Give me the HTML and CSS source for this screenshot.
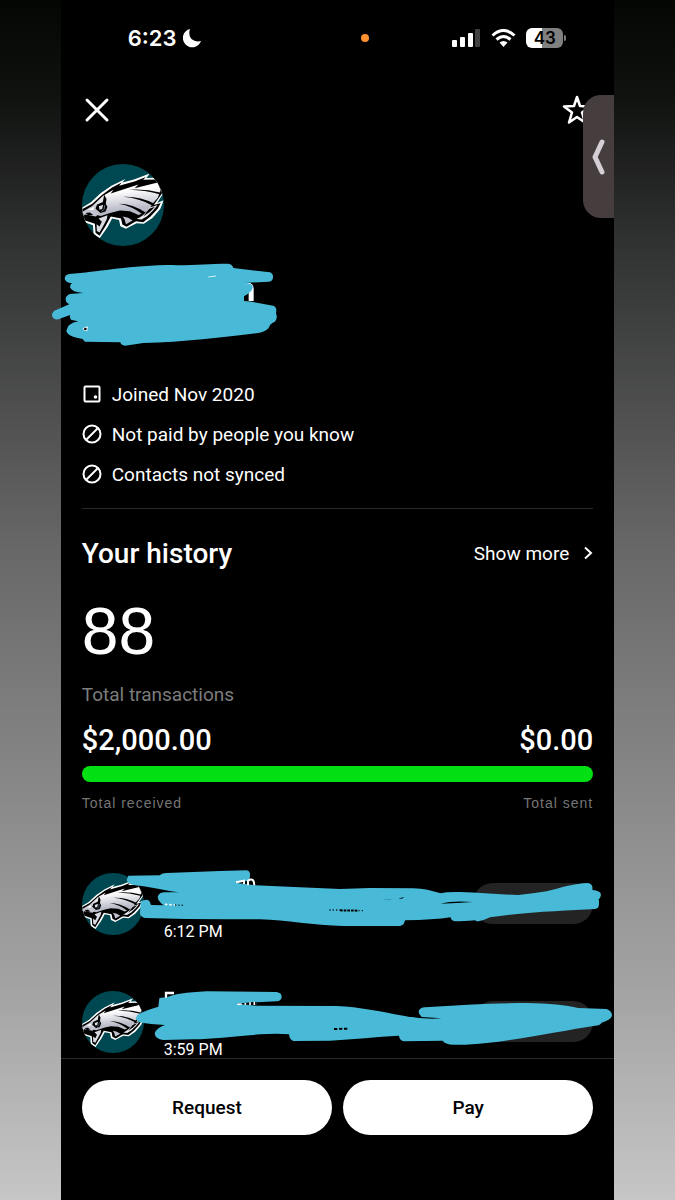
FILE: index.html
```
<!DOCTYPE html>
<html lang="en">
<head>
    <meta charset="UTF-8">
    <meta name="viewport" content="width=device-width, initial-scale=1.0">
    <title>Profile</title>
    <link rel="stylesheet" href="styles.css">
</head>
<body>
    <svg class="defs" aria-hidden="true">
        <defs>
            <linearGradient id="feather" x1="0.4" y1="0" x2="0.6" y2="1">
                <stop offset="0.25" stop-color="#ffffff"/>
                <stop offset="0.8" stop-color="#b9bac8"/>
            </linearGradient>
            <clipPath id="round"><circle cx="159" cy="149" r="124"/></clipPath>
        </defs>
        <symbol id="eagle" viewBox="35 25 248 248">
            <g clip-path="url(#round)">
                <rect x="35" y="25" width="248" height="248" fill="#004851"/>
                <path fill="#fff" d="M30 160L62 141L92 113L124 91L166 70L157 81L192 72L240 54L230 67L268 66L290 100L262 143L282 135L272 160L248 188L222 206L200 204L168 221L151 213L147 194L126 190L112 216L89 249L70 238L68 210L30 196Z"/>
                <path fill="#000" d="M30 165L66 145L96 118L126 96L155 81L147 91L196 77L228 64L220 73L274 72L284 104L252 149L273 143L264 160L243 183L220 201L198 198L170 215L157 208L153 190L122 184L106 213L88 242L76 233L74 206L30 191Z"/>
                <path fill="url(#feather)" d="M66 152L98 122L130 103L122 114L206 87L194 98L264 81L273 104L264 128L248 145L240 160L225 172L206 179L180 168L150 166L120 173L92 182L72 178Z"/>
                <path fill="#000" d="M176 103Q224 99 274 112L272 117Q226 104 176 103ZM160 124Q210 122 254 145L249 151Q208 128 160 124ZM146 145Q188 145 230 173L220 179Q188 152 146 145Z"/>
                <path fill="#000" d="M128 172Q158 164 178 175Q192 188 208 184L196 199L180 192Q158 174 128 180Z"/>
                <path fill="#c2c3ce" d="M158 184Q176 186 188 196L168 207L164 193Z"/>
                <path fill="#e8e8ee" d="M238 157L264 149L250 166L232 183L215 193L200 191Q224 181 238 157Z"/>
                <path fill="#000" d="M238 160L256 154L240 170L220 184Z"/>
                <path fill="#c3c4cf" d="M34 171L67 151L80 150L75 163L89 172L77 184L44 178L34 187Z"/>
                <path fill="#fff" d="M52 163L72 154L69 164Z"/>
                <path fill="#000" d="M46 173L59 172L69 179L54 181Z"/>
                <path fill="#d9dae1" d="M85 190L112 180L110 192L100 211L88 232L80 228L79 207L88 214L95 200Z"/>
                <path fill="#000" d="M102 118L109 131L107 146L112 154L106 169L91 173L76 160L80 148L98 140Z"/>
                <path fill="#d7dde5" d="M86 153L99 148L96 161L88 163Z"/>
                <path fill="none" stroke="#5f737b" stroke-width="3" d="M104 149L102 162L94 168"/>
            </g>
        </symbol>
    </svg>

    <div class="phone">
        <div class="status-bar">
            <div class="clock">
                <span>6:23</span>
                <svg width="20" height="20" viewBox="0 0 20 20"><path fill="#fff" d="M7 1A9.300 9.300 0 1 0 18 13C11 15 4 10 7 1Z"/></svg>
            </div>
            <span class="mic-dot"></span>
            <div class="signals">
                <svg width="29" height="18" viewBox="0 0 29 18">
                    <g fill="#fff"><rect x="0" y="11" width="5" height="7" rx="1"/><rect x="8" y="8" width="5" height="10" rx="1"/><rect x="16" y="4" width="5" height="14" rx="1"/></g>
                    <rect x="23" y="0" width="5" height="18" rx="1" fill="#414141"/>
                </svg>
                <svg width="25" height="18" viewBox="0 0 25 18">
                    <g fill="none" stroke="#fff" stroke-width="3"><path d="M1.500 6.500Q12.500 -3.500 23.500 6.500"/><path d="M5.500 10.500Q12.500 4.500 19.500 10.500"/></g>
                    <path fill="#fff" d="M8.500 13.500Q12.500 10.500 16.500 13.500L12.500 18Z"/>
                </svg>
                <span class="battery">43</span>
            </div>
        </div>

        <header class="top-bar">
            <button class="icon-btn" aria-label="Close">
                <svg width="30" height="30" viewBox="0 0 30 30"><path d="M5 5L25 25M25 5L5 25" stroke="#fff" stroke-width="3" stroke-linecap="round"/></svg>
            </button>
            <button class="icon-btn" aria-label="Favorite">
                <svg width="32" height="32" viewBox="0 0 32 32"><path d="M16 3L19 12L29 12.500L21 18.500L24 28.500L16 23L8 28.500L11 18.500L3 12.500L13 12Z" fill="none" stroke="#fff" stroke-width="2.500" stroke-linejoin="round"/></svg>
            </button>
        </header>
        <button class="side-handle" aria-label="Show side panel">
            <svg width="16" height="40" viewBox="0 0 16 40"><path d="M12 5L5 20L12 35" fill="none" stroke="#d5ced4" stroke-width="5" stroke-linecap="round" stroke-linejoin="round"/></svg>
        </button>

        <main>
            <section class="profile">
                <svg class="avatar"><use href="#eagle"/></svg>
                <div class="name">
                    <svg class="scribble scribble-name" viewBox="30 18 690 261">
                        <path fill="#fff" d="M610 85Q640 78 641 100L641 138L626 138L626 100Z"/>
                        <path fill="#48bad7" d="M88 57C180 50 240 35 380 30C460 32 500 26 565 26Q578 28 580 39L690 52Q700 56 699 68Q697 80 685 80L612 84Q640 84 638 98Q636 110 612 124L612 138C640 140 670 147 700 152Q712 156 708 175Q714 190 705 200Q690 206 688 215Q682 228 655 234C560 245 430 262 310 264L255 272Q244 272 241 262L135 260Q130 256 128 252Q82 245 79 228Q82 205 115 199L95 195Q88 190 90 180L55 193Q38 195 36 180Q37 168 50 164L88 148Q76 142 77 130Q80 116 98 116L130 114Q95 112 90 97Q90 88 96 85Q75 84 74 70Q76 58 88 57Z"/>
                        <path fill="none" stroke="#d8f2f8" stroke-width="3" d="M505 66L528 63"/>
                        <path fill="#fff" d="M128 220L143 214L142 228L133 227Z"/>
                        <circle cx="136" cy="222" r="4" fill="#000"/>
                    </svg>
                </div>
                <ul class="facts">
                    <li>
                        <svg width="20" height="20" viewBox="0 0 20 20"><rect x="2.500" y="2.500" width="15" height="15" rx="1" fill="none" stroke="#fff" stroke-width="2"/><circle cx="13.500" cy="13" r="1.800" fill="#fff"/></svg>
                        <span>Joined Nov 2020</span>
                    </li>
                    <li>
                        <svg width="20" height="20" viewBox="0 0 20 20"><g fill="none" stroke="#fff" stroke-width="2"><circle cx="10" cy="10" r="8.500"/><path d="M4.500 15.500L15.500 4.500"/></g></svg>
                        <span>Not paid by people you know</span>
                    </li>
                    <li>
                        <svg width="20" height="20" viewBox="0 0 20 20"><g fill="none" stroke="#fff" stroke-width="2"><circle cx="10" cy="10" r="8.500"/><path d="M4.500 15.500L15.500 4.500"/></g></svg>
                        <span>Contacts not synced</span>
                    </li>
                </ul>
            </section>

            <section class="history">
                <div class="history-head">
                    <h2>Your history</h2>
                    <a href="#" class="more">Show more
                        <svg width="10" height="16" viewBox="0 0 10 16"><path d="M2 2.500L8 8L2 13.500" fill="none" stroke="#fff" stroke-width="2"/></svg>
                    </a>
                </div>
                <div class="count">88</div>
                <div class="count-label">Total transactions</div>
                <div class="split amounts"><span>$2,000.00</span><span>$0.00</span></div>
                <div class="bar"></div>
                <div class="split labels"><span>Total received</span><span>Total sent</span></div>
            </section>

            <section class="transactions">
                <div class="tx">
                    <svg class="avatar-small"><use href="#eagle"/></svg>
                    <span class="time">6:12 PM</span>
                    <span class="pill"></span>
                    <svg class="scribble scribble-one" viewBox="189 24 1440 186">
                        <path fill="#48bad7" d="M205 47L300 46Q303 40 320 39L480 33L560 31Q572 34 570 48L568 62L525 68L585 76L840 87L930 84L1060 85C1090 86 1115 92 1142 100Q1160 95 1200 96C1260 98 1310 103 1375 105Q1420 100 1460 94C1500 84 1540 70 1585 69Q1600 72 1597 90Q1622 92 1623 104Q1621 115 1616 118Q1621 145 1605 147C1520 152 1400 155 1290 172Q1270 182 1255 184Q1250 185 1245 181Q1210 184 1185 184Q1173 182 1172 172Q1120 180 1035 181Q1033 196 1020 198L850 198C760 197 680 180 600 178L500 178Q380 178 255 174Q240 170 240 160L242 128Q247 119 262 119Q270 122 273 135L312 136Q294 125 293 110Q297 97 315 97L358 97C320 93 280 82 225 76Q203 72 200 60Z"/>
                        <path fill="#000" d="M1142 131Q1180 121 1238 126Q1190 130 1142 131ZM965 119L1000 116L990 118ZM1015 115L1033 112L1026 116Z"/>
                        <path fill="none" stroke="#fff" stroke-width="6" d="M528 67L552 62L552 72M564 76L564 62Q582 50 583 76"/>
                        <path fill="none" stroke="#fff" stroke-width="5" stroke-dasharray="7 6" d="M315 133L345 135"/>
                        <path fill="none" stroke="#132026" stroke-width="4" stroke-dasharray="4 6" d="M345 135L370 136M808 150L840 150M895 152L915 152"/>
                        <path fill="none" stroke="#000" stroke-width="6" stroke-dasharray="8 3" d="M840 151L892 152"/>
                    </svg>
                </div>
                <div class="tx">
                    <svg class="avatar-small"><use href="#eagle"/></svg>
                    <span class="time">3:59 PM</span>
                    <span class="pill"></span>
                    <svg class="scribble scribble-two" viewBox="225 45 1440 171">
                        <path fill="none" stroke="#fff" stroke-width="7" d="M318 70L318 54L342 54"/>
                        <path fill="#48bad7" d="M232 120Q250 108 295 95L298 70Q305 66 318 68Q350 53 440 49L650 51Q666 54 665 66Q664 78 650 79L590 82L588 92L830 93C900 96 960 110 1030 122Q1090 134 1145 130L1085 126Q1075 118 1076 108Q1080 98 1095 97C1200 90 1300 84 1400 84Q1500 86 1555 99L1640 102Q1656 108 1656 122Q1652 135 1625 143Q1620 152 1605 152C1520 165 1400 190 1280 204Q1220 211 1180 209Q1155 208 1148 197L1035 199Q1018 198 1017 182C950 186 880 192 810 197L700 198Q688 194 687 178Q650 175 600 178C520 184 460 192 400 193L310 195Q285 192 284 175Q290 158 315 150Q270 148 240 142Q228 136 228 128Z"/>
                        <path fill="#000" d="M530 86L590 80L588 92Z"/>
                        <path fill="none" stroke="#fff" stroke-width="5" d="M532 88L545 87M556 89L556 84M570 90L570 82M583 90L583 80"/>
                        <path fill="none" stroke="#000" stroke-width="6" stroke-dasharray="10 5" d="M822 162L862 161"/>
                    </svg>
                </div>
            </section>
        </main>

        <footer class="actions">
            <button>Request</button>
            <button>Pay</button>
        </footer>
    </div>
</body>
</html>
```
FILE: styles.css
```
* {
    box-sizing: border-box;
}
body {
    margin: 0;
    padding: 0 9%;
    font-family: Roboto, 'Liberation Sans', Arial, sans-serif;
    color: #fff;
    background: linear-gradient(#040604 0%, #101210 8%, #303131 20%, #686868 46%, #a6a6a6 84%, #c6c6c6 100%);
}
button {
    border: none;
    padding: 0;
    font-family: inherit;
    cursor: pointer;
}
svg {
    display: block;
}
.defs {
    position: absolute;
    width: 0;
    height: 0;
}
.phone {
    position: relative;
    display: flex;
    flex-direction: column;
    min-height: 100vh;
    background-color: #000;
}
.status-bar {
    display: grid;
    grid-template-columns: 1fr auto 1fr;
    align-items: center;
    height: 76px;
    padding: 0 51px 0 67px;
    font-family: Inter, sans-serif;
}
.clock {
    display: flex;
    align-items: center;
    gap: 6px;
    font-size: 22px;
    font-weight: 600;
}
.mic-dot {
    width: 8px;
    height: 8px;
    margin-left: 38px;
    border-radius: 50%;
    background-color: #ff9030;
}
.signals {
    display: flex;
    align-items: center;
    justify-content: flex-end;
    gap: 10px;
}
.battery {
    position: relative;
    width: 37px;
    height: 20px;
    border-radius: 6px;
    background: linear-gradient(90deg, #fff 43%, #808080 43%);
    color: #000;
    font-size: 17px;
    font-weight: 600;
    line-height: 20px;
    text-align: center;
}
.battery::after {
    content: "";
    position: absolute;
    top: 7px;
    right: -3px;
    width: 2px;
    height: 6px;
    border-radius: 0 2px 2px 0;
    background-color: #808080;
}
.top-bar {
    display: flex;
    align-items: center;
    justify-content: space-between;
    height: 68px;
    padding: 0 21px;
}
.icon-btn {
    background: none;
}
.side-handle {
    position: absolute;
    top: 95px;
    right: 0;
    display: flex;
    align-items: center;
    width: 31px;
    height: 123px;
    padding-left: 7px;
    border-radius: 18px 0 0 18px;
    background-color: #463d3f;
}
main {
    padding: 20px 21px 0;
}
.avatar {
    width: 82px;
    height: 82px;
}
.name {
    position: relative;
    height: 80px;
    margin-top: 19px;
}
.scribble {
    position: absolute;
}
.scribble-name {
    top: -4px;
    left: -32px;
    width: 230px;
    height: 87px;
}
.facts {
    margin: 29px 0 0;
    padding: 0 0 14px;
    list-style: none;
    border-bottom: 1px solid #2a2a2a;
}
.facts li {
    display: flex;
    align-items: center;
    gap: 10px;
    height: 40px;
    font-size: 19px;
}
.history-head {
    display: flex;
    align-items: center;
    justify-content: space-between;
    height: 44px;
    margin-top: 22px;
}
h2 {
    margin: 0;
    font-size: 28px;
    font-weight: 500;
}
.more {
    display: flex;
    align-items: center;
    gap: 14px;
    color: #fff;
    font-size: 19px;
    text-decoration: none;
}
.count {
    margin-top: 20px;
    font-family: 'Liberation Sans', Arial, sans-serif;
    font-size: 66px;
    line-height: 72px;
}
.count-label {
    margin-top: 16px;
    color: #7d7d7d;
    font-size: 19px;
    line-height: 24px;
}
.split {
    display: flex;
    justify-content: space-between;
}
.amounts {
    margin-top: 17px;
    font-size: 29px;
    font-weight: 500;
    line-height: 32px;
}
.bar {
    height: 16px;
    margin-top: 10px;
    border-radius: 8px;
    background-color: #00e013;
}
.labels {
    margin-top: 11px;
    color: #757575;
    font-family: 'Liberation Sans', Arial, sans-serif;
    font-size: 14px;
    letter-spacing: 1px;
    line-height: 20px;
}
.transactions {
    display: grid;
    gap: 56px;
    margin-top: 60px;
}
.tx {
    position: relative;
    display: flex;
    height: 62px;
}
.avatar-small {
    flex: none;
    width: 62px;
    height: 62px;
}
.time {
    padding: 47px 0 0 20px;
    font-size: 16px;
    line-height: 24px;
}
.pill {
    width: 120px;
    height: 41px;
    margin: 10px 0 0 auto;
    border-radius: 20px;
    background-color: #232323;
}
.scribble-one {
    top: -5px;
    left: 41px;
    width: 480px;
    height: 62px;
}
.scribble-two {
    top: -1px;
    left: 53px;
    width: 480px;
    height: 57px;
}
.actions {
    display: flex;
    gap: 11px;
    margin-top: auto;
    padding: 21px 21px 65px;
    border-top: 1px solid #2a2a2a;
}
.actions button {
    flex: 1;
    height: 55px;
    border-radius: 28px;
    background-color: #fff;
    color: #000;
    font-size: 19px;
    font-weight: 500;
}
```
